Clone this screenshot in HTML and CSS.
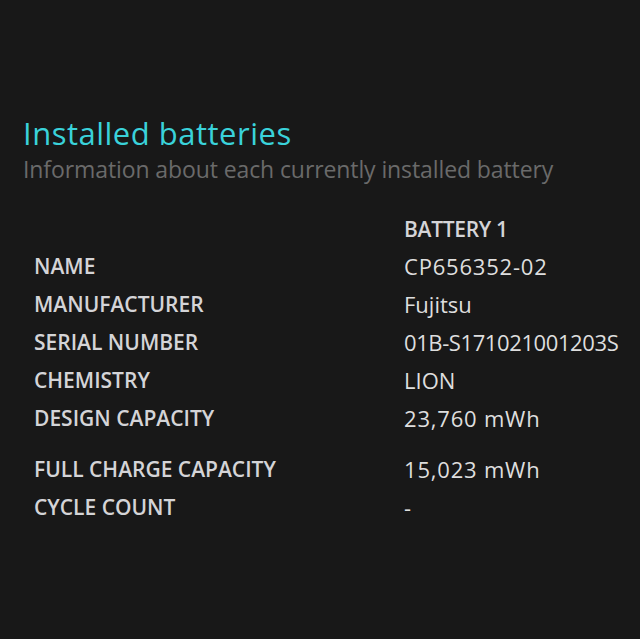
FILE: index.html
```html
<!DOCTYPE html>
<html>
<head>
<meta charset="utf-8">
<link rel="stylesheet" href="styles.css">
</head>
<body>
<main class="page">
  <h1 class="title">Installed batteries</h1>
  <p class="subtitle">Information about each currently installed battery</p>
  <div class="table">
    <div class="row head"><span class="label"></span><span class="value">BATTERY 1</span></div>
    <div class="row"><span class="label">NAME</span><span class="value num">CP656352-02</span></div>
    <div class="row"><span class="label">MANUFACTURER</span><span class="value">Fujitsu</span></div>
    <div class="row"><span class="label">SERIAL NUMBER</span><span class="value serial">01B-S171021001203S</span></div>
    <div class="row"><span class="label">CHEMISTRY</span><span class="value">LION</span></div>
    <div class="row"><span class="label">DESIGN CAPACITY</span><span class="value num">23,760 mWh</span></div>
    <div class="row gap"><span class="label">FULL CHARGE CAPACITY</span><span class="value num">15,023 mWh</span></div>
    <div class="row"><span class="label">CYCLE COUNT</span><span class="value">-</span></div>
  </div>
</main>
</body>
</html>
```
FILE: styles.css
```css
html, body {
  margin: 0;
  padding: 0;
  background: #181818;
  height: 100%;
}
.page {
  font-family: "Open Sans", "Noto Sans", sans-serif;
  padding: 113px 0 0 23px;
}
.title {
  margin: 0;
  font-size: 31px;
  font-weight: 400;
  color: #3ad2da;
  line-height: 40px;
  letter-spacing: 0.5px;
}
.subtitle {
  margin: 0;
  font-size: 23px;
  color: #6a6a6a;
  line-height: 32px;
  letter-spacing: -0.1px;
}
.table {
  margin-top: 25px;
  padding-left: 11px;
}
.row {
  display: grid;
  grid-template-columns: 370px auto;
  height: 38px;
  align-items: center;
}
.row.head {
  height: 37px;
}
.row.gap {
  margin-top: 13px;
}
.label {
  font-size: 21px;
  font-weight: 600;
  color: #d4d4d7;
}
.value {
  font-size: 22px;
  color: #dedede;
}
.value.num {
  letter-spacing: 0.8px;
}
.value.serial {
  letter-spacing: -0.4px;
}
.head .value {
  font-size: 21px;
  font-weight: 600;
  color: #d4d4d7;
  letter-spacing: -0.3px;
}
```
